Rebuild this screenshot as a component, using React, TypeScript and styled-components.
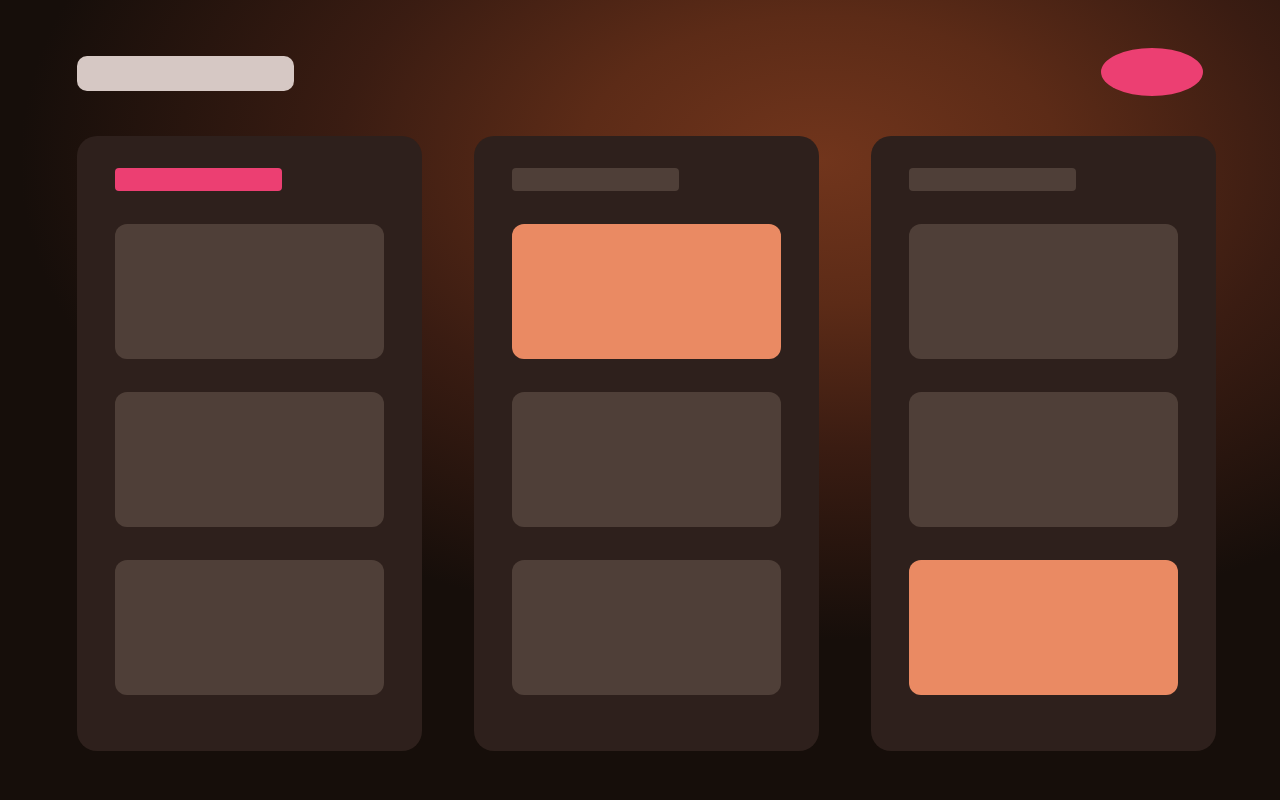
import React from 'react';
import styled, { createGlobalStyle } from 'styled-components';

const GlobalStyle = createGlobalStyle`
  html, body {
    margin: 0;
    padding: 0;
    height: 100%;
  }
  body {
    background: #160e0a;
    font-family: 'Inter', sans-serif;
  }
`;

const Page = styled.div`
  width: 1280px;
  height: 800px;
  box-sizing: border-box;
  padding: 48px 64px 0 77px;
  overflow: hidden;
  background:
    radial-gradient(ellipse 800px 480px at 820px 160px, #71351c 0%, #5c2b17 30%, #3a1c12 60%, #160e0a 100%),
    #160e0a;
`;

const Header = styled.header`
  display: flex;
  align-items: center;
  justify-content: space-between;
  height: 48px;
  padding-right: 13px;
`;

const SearchPill = styled.div`
  width: 217px;
  height: 35px;
  border-radius: 10px;
  background: #d6c8c4;
  margin-top: 3px;
`;

const Avatar = styled.div`
  width: 102px;
  height: 48px;
  border-radius: 50%;
  background: #ec3f72;
`;

const Board = styled.main`
  display: grid;
  grid-template-columns: repeat(3, 345px);
  justify-content: space-between;
  margin-top: 40px;
`;

const Column = styled.section`
  height: 615px;
  box-sizing: border-box;
  padding: 32px 38px;
  border-radius: 20px;
  background: #2e201c;
  display: flex;
  flex-direction: column;
  gap: 33px;
`;

const ColumnTitle = styled.div<{ $active?: boolean }>`
  width: 167px;
  height: 23px;
  border-radius: 4px;
  background: ${(p) => (p.$active ? '#ec3f72' : '#4f3f38')};
`;

const Card = styled.div<{ $highlight?: boolean }>`
  height: 135px;
  border-radius: 12px;
  background: ${(p) => (p.$highlight ? '#ea8a63' : '#4f3f38')};
`;

const columns = [
  { active: true, cards: [false, false, false] },
  { active: false, cards: [true, false, false] },
  { active: false, cards: [false, false, true] },
];

export default function App() {
  return (
    <>
      <GlobalStyle />
      <Page>
        <Header>
          <SearchPill />
          <Avatar />
        </Header>
        <Board>
          {columns.map((col, i) => (
            <Column key={i}>
              <ColumnTitle $active={col.active} />
              {col.cards.map((hl, j) => (
                <Card key={j} $highlight={hl} />
              ))}
            </Column>
          ))}
        </Board>
      </Page>
    </>
  );
}
